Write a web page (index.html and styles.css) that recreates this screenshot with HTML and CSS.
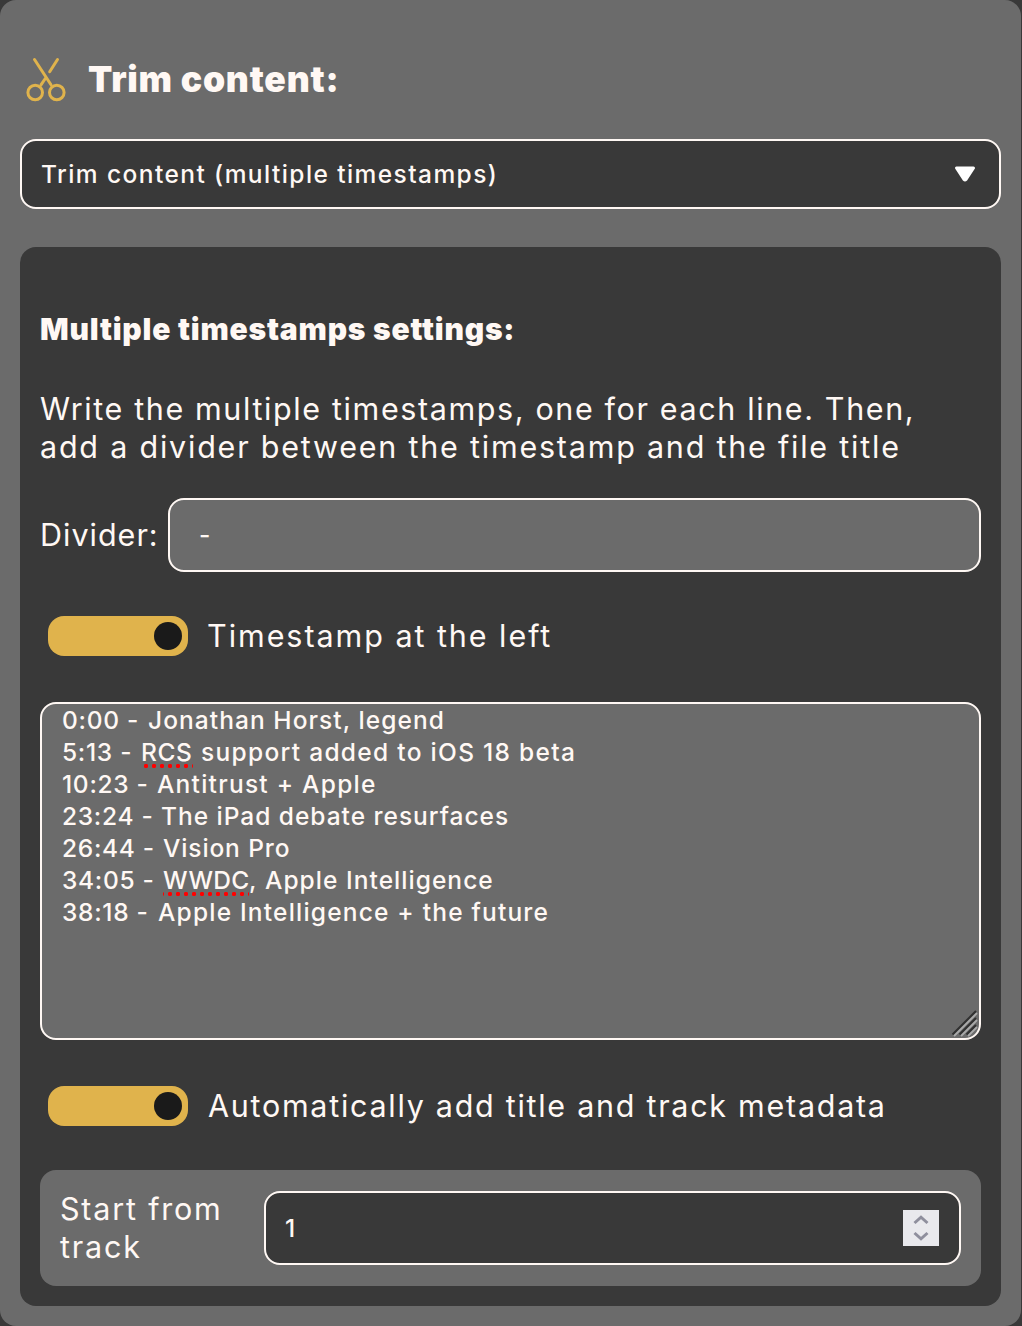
FILE: index.html
```html
<!DOCTYPE html>
<html lang="en">
<head>
<meta charset="utf-8">
<title>Trim content</title>
<link rel="stylesheet" href="styles.css">
</head>
<body>
<main class="card">
  <header class="heading">
    <svg class="scissors" width="42" height="46" viewBox="0 0 42 46" fill="none" stroke="#e0b34c" stroke-width="3" stroke-linecap="round">
      <path d="M9.500 3.500 26 28.800M32.500 3.500 24.700 15.700M20.300 22.500 16 28.800"/>
      <circle cx="10.200" cy="36.500" r="7.300"/>
      <circle cx="31.800" cy="36.500" r="7.300"/>
    </svg>
    <h1 class="title">Trim content:</h1>
  </header>

  <div class="select" role="combobox">
    <span>Trim content (multiple timestamps)</span>
    <svg class="arrow" width="22" height="18" viewBox="0 0 22 18"><path d="M2.500 3H19.500L12 14.500Q11 15.500 10 14.500Z" fill="#fff" stroke="#fff" stroke-width="3" stroke-linejoin="round"/></svg>
  </div>

  <section class="panel">
    <h2 class="subtitle">Multiple timestamps settings:</h2>
    <p class="intro"><span class="intro-first">Write the multiple timestamps, one for each line. Then,</span><br><span class="intro-second">add a divider between the timestamp and the file title</span></p>

    <div class="divider-row">
      <span class="divider-label">Divider:</span>
      <div class="divider-input">-</div>
    </div>

    <div class="toggle-row">
      <span class="toggle"></span>
      <span class="toggle-text left-text">Timestamp at the left</span>
    </div>

    <div class="textarea">
      <div class="line l1"><span class="stamp">0:00 -</span><span>Jonathan Horst, legend</span></div>
      <div class="line l2"><span class="stamp">5:13 -</span><span class="spell rcs">RCS</span><span>support added to iOS 18 beta</span></div>
      <div class="line l3"><span class="stamp">10:23 -</span><span>Antitrust + Apple</span></div>
      <div class="line l4"><span class="stamp">23:24 -</span><span>The iPad debate resurfaces</span></div>
      <div class="line l5"><span class="stamp">26:44 -</span><span>Vision Pro</span></div>
      <div class="line l6"><span class="stamp">34:05 -</span><span class="spell wwdc">WWDC</span><span class="comma">,</span><span>Apple Intelligence</span></div>
      <div class="line l7"><span class="stamp">38:18 -</span><span>Apple Intelligence + the future</span></div>
      <svg class="grip" width="28" height="28" viewBox="0 0 28 28" fill="none" stroke-width="2">
        <path stroke="#a9a9a9" d="M3 27 26 4M10 27 26 11M17 27 26 18"/>
        <path stroke="#303030" d="M1.500 25.500 25 2M8.500 25.500 25 9M15.500 25.500 25 16"/>
      </svg>
    </div>

    <div class="toggle-row">
      <span class="toggle"></span>
      <span class="toggle-text auto-text">Automatically add title and track metadata</span>
    </div>

    <div class="track">
      <span class="track-label">Start from track</span>
      <div class="number">
        <span>1</span>
        <svg class="spinner" width="36" height="36" viewBox="0 0 36 36"><path fill="#e9e9ed" d="M0 0h36v36H0z"/><path d="M11.500 13 18 7.200 24.500 13M11.500 23 18 28.800 24.500 23" fill="none" stroke="#8f8f9d" stroke-width="3"/></svg>
      </div>
    </div>
  </section>
</main>
</body>
</html>
```
FILE: styles.css
```css
* { box-sizing: border-box; }
body {
  margin: 0;
  background: #393939;
  color: #fff8f4;
  font: 400 30.5px/38px Inter, "Liberation Sans", sans-serif;
  letter-spacing: 1.7px;
  white-space: nowrap;
}
.card {
  width: 1021px;
  height: 1326px;
  padding: 55px 20px 20px;
  border-radius: 16px;
  background: #6b6b6b;
}
.heading { display: flex; align-items: center; height: 48px; padding-left: 5px; }
.scissors { flex: none; }
.title { margin: 0 0 0 21px; padding-top: 1px; font-size: 35.5px; font-weight: 900; letter-spacing: 0.78px; }
.select, .divider-input, .number {
  display: flex;
  align-items: center;
  justify-content: space-between;
  border: 2px solid #fff8f4;
  border-radius: 16px;
  font-size: 24.5px;
  font-weight: 500;
  line-height: 32px;
}
.select {
  height: 70px;
  margin-top: 36px;
  padding: 0 23px 0 19px;
  background: #393939;
  letter-spacing: 1.42px;
}
.panel {
  height: 1059px;
  margin-top: 38px;
  padding: 63px 20px 20px;
  border-radius: 16px;
  background: #393939;
}
.subtitle { margin: 0; font-size: 30px; font-weight: 900; letter-spacing: 0.8px; }
.intro { margin: 42px 0 0; }
.intro-first { letter-spacing: 1.62px; }
.intro-second { letter-spacing: 1.78px; }
.divider-row { display: flex; align-items: center; margin-top: 32px; }
.divider-label { width: 128px; letter-spacing: 1px; }
.divider-input { flex: 1; height: 74px; padding: 0 29px 0; background: #6b6b6b; }
.toggle-row { display: flex; align-items: center; height: 40px; margin-top: 44px; padding-left: 8px; }
.toggle {
  display: flex;
  align-items: center;
  justify-content: flex-end;
  width: 140px;
  height: 40px;
  padding-right: 6px;
  border-radius: 16px;
  background: #e0b34c;
}
.toggle::after { content: ""; width: 28px; height: 28px; border-radius: 50%; background: #1a1a1a; }
.toggle-text { margin-left: 20px; }
.left-text { margin-left: 19px; letter-spacing: 1.95px; }
.auto-text { letter-spacing: 1.72px; }
.textarea {
  position: relative;
  height: 338px;
  margin-top: 46px;
  padding: 0 20px;
  border: 2px solid #fff8f4;
  border-radius: 16px;
  background: #6b6b6b;
  font-size: 24.5px;
  font-weight: 500;
  line-height: 32px;
}
.textarea + .toggle-row { margin-top: 46px; }
.line { display: flex; height: 32px; }
.stamp { flex: none; letter-spacing: 0.7px; }
.l1 { letter-spacing: 1.06px; }
.l1 .stamp { width: 86px; }
.l2 { letter-spacing: 1.3px; }
.l2 .stamp { width: 79px; }
.l3 { letter-spacing: 1.25px; }
.l3 .stamp { width: 95px; }
.l4 { letter-spacing: 0.98px; }
.l4 .stamp { width: 99px; }
.l5 { letter-spacing: 0.88px; }
.l5 .stamp { width: 101px; }
.l6 { letter-spacing: 1.04px; }
.l6 .stamp { width: 101px; }
.l7 { letter-spacing: 1.2px; }
.l7 .stamp { width: 96px; }
.spell { position: relative; }
.spell::after {
  content: "";
  position: absolute;
  left: 1px;
  top: 28px;
  height: 4px;
  background: radial-gradient(circle at 4px 2px, #f00 1.9px, transparent 2.4px) 0 0 / 8px 4px;
}
.rcs { width: 60px; letter-spacing: 0.6px; }
.rcs::after { width: 51px; }
.wwdc { width: 86px; letter-spacing: 0.3px; }
.wwdc::after { left: 0; width: 86px; background-position: 3px 0; }
.comma { width: 16px; }
.grip { position: absolute; right: 0; bottom: 1px; }
.track {
  display: flex;
  align-items: center;
  height: 116px;
  margin-top: 44px;
  padding: 0 20px;
  border-radius: 16px;
  background: #6b6b6b;
}
.track-label { width: 204px; padding-right: 30px; white-space: normal; letter-spacing: 1.8px; }
.number { flex: 1; height: 74px; padding: 0 20px 0 19px; background: #393939; }
```
